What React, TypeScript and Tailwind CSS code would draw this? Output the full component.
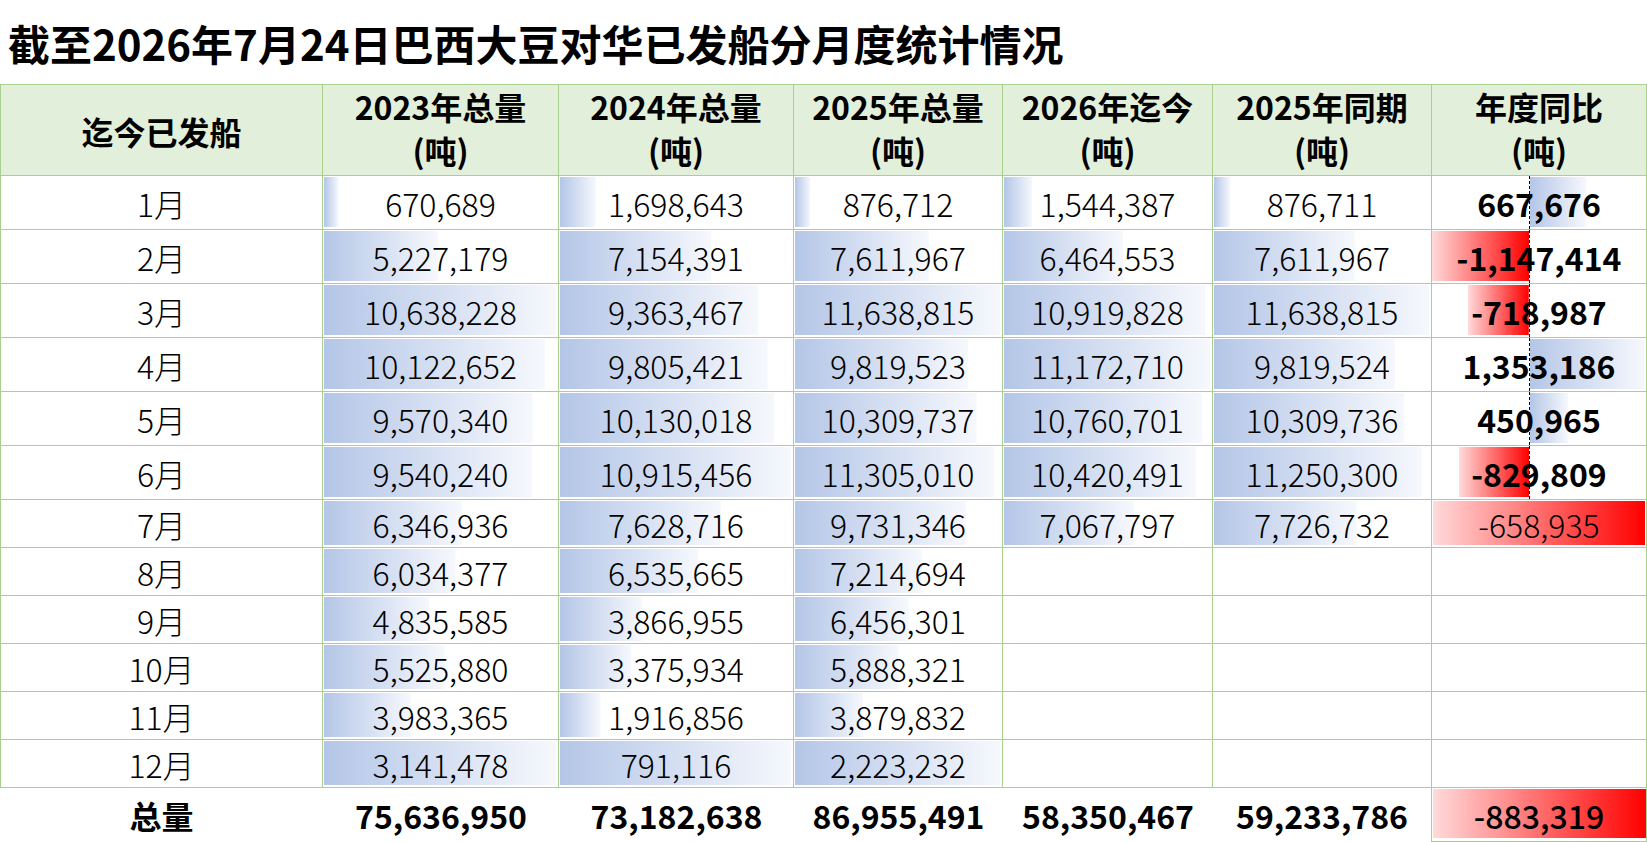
import React from "react";

type Row = { label: string; vals: (number | null)[] };

const rows: Row[] = [
  { label: "1月", vals: [670689, 1698643, 876712, 1544387, 876711, 667676] },
  { label: "2月", vals: [5227179, 7154391, 7611967, 6464553, 7611967, -1147414] },
  { label: "3月", vals: [10638228, 9363467, 11638815, 10919828, 11638815, -718987] },
  { label: "4月", vals: [10122652, 9805421, 9819523, 11172710, 9819524, 1353186] },
  { label: "5月", vals: [9570340, 10130018, 10309737, 10760701, 10309736, 450965] },
  { label: "6月", vals: [9540240, 10915456, 11305010, 10420491, 11250300, -829809] },
  { label: "7月", vals: [6346936, 7628716, 9731346, 7067797, 7726732, -658935] },
  { label: "8月", vals: [6034377, 6535665, 7214694, null, null, null] },
  { label: "9月", vals: [4835585, 3866955, 6456301, null, null, null] },
  { label: "10月", vals: [5525880, 3375934, 5888321, null, null, null] },
  { label: "11月", vals: [3983365, 1916856, 3879832, null, null, null] },
  { label: "12月", vals: [3141478, 791116, 2223232, null, null, null] },
];

const totals = [75636950, 73182638, 86955491, 58350467, 59233786];
const totalYoy = -883319;

// inner widths (content, without right border) of the six value columns
const inner = [235, 234, 208, 209, 218, 214];
// max values for the bar ranges
const maxes = [10638228, 10915456, 11638815, 11172710, 11638815];

const headers: string[][] = [
  ["2023年总量", "(吨)"],
  ["2024年总量", "(吨)"],
  ["2025年总量", "(吨)"],
  ["2026年迄今", "(吨)"],
  ["2025年同期", "(吨)"],
  ["年度同比", "(吨)"],
];

const fmt = (n: number) => n.toLocaleString("en-US");

const BLUE = "linear-gradient(to right, #b4c6e7, #f6f8fd)";
const RED = "linear-gradient(to right, #ffdada, #ff0000)";

const AXIS = 97;
const K = 97 / 1147414;

function barStyle(w: number, left: number, grad: string): React.CSSProperties {
  return {
    backgroundImage: grad,
    backgroundSize: `${w}px calc(100% - 3px)`,
    backgroundPosition: `${left}px 1px`,
    backgroundRepeat: "no-repeat",
  };
}

export default function App() {
  const cellBase =
    "relative flex items-center justify-center border-r border-b border-[#a9d08e] text-[32px] leading-none text-black";

  return (
    <div className="w-[1647px] h-[842px] bg-white overflow-hidden font-['Noto_Sans_CJK_SC',sans-serif] text-black">
      <div className="h-[84px] flex items-center pl-[8px] text-[42px] font-bold">
        截至2026年7月24日巴西大豆对华已发船分月度统计情况
      </div>
      <div className="grid grid-cols-[323px_236px_235px_209px_210px_219px_215px]">
        {/* header */}
        <div className="h-[92px] flex items-center justify-center border-l border-t border-r border-b border-[#a9d08e] bg-[#e2efda] text-[32px] font-bold pt-[2px]">
          迄今已发船
        </div>
        {headers.map((h, i) => (
          <div
            key={i}
            className="h-[92px] flex flex-col items-center justify-center border-t border-r border-b border-[#a9d08e] bg-[#e2efda] text-[32px] font-bold leading-[44px] pb-[4px]"
          >
            <span>{h[0]}</span>
            <span>{h[1]}</span>
          </div>
        ))}

        {/* body */}
        {rows.map((r, ri) => {
          const h = ri < 6 ? "h-[54px]" : "h-[48px]";
          return (
            <React.Fragment key={r.label}>
              <div className={`${cellBase} ${h} border-l font-light`}>{r.label}</div>
              {r.vals.map((v, ci) => {
                if (v === null) {
                  return <div key={ci} className={`${cellBase} ${h}`} />;
                }
                if (ci < 5) {
                  const W = inner[ci] - 3;
                  const w = ri === 11 ? W : (v / maxes[ci]) * W;
                  return (
                    <div key={ci} className={`${cellBase} ${h} font-light`} style={barStyle(w, 1, BLUE)}>
                      <span className="relative">{fmt(v)}</span>
                    </div>
                  );
                }
                // YoY column
                if (ri === 6) {
                  return (
                    <div key={ci} className={`${cellBase} ${h} font-light`} style={barStyle(212, 1, RED)}>
                      <span className="relative">{fmt(v)}</span>
                    </div>
                  );
                }
                const w = Math.abs(v) * K;
                const style =
                  v < 0 ? barStyle(w, AXIS - w, RED) : barStyle(w, AXIS + 1, BLUE);
                return (
                  <div key={ci} className={`${cellBase} ${h} font-bold`} style={style}>
                    <div className="absolute top-0 bottom-[-1px] left-[97px] w-px bg-[repeating-linear-gradient(to_bottom,#000_0px,#000_3px,transparent_3px,transparent_5px)]" />
                    <span className="relative">{fmt(v)}</span>
                  </div>
                );
              })}
            </React.Fragment>
          );
        })}

        {/* totals */}
        <div className="h-[54px] flex items-center justify-center text-[32px] font-bold leading-none">总量</div>
        {totals.map((t, i) => (
          <div
            key={i}
            className={`h-[54px] flex items-center justify-center text-[32px] font-bold leading-none ${
              i === 4 ? "border-r border-[#a9d08e]" : ""
            }`}
          >
            {fmt(t)}
          </div>
        ))}
        <div
          className="h-[54px] flex items-center justify-center border-r border-b border-[#a9d08e] text-[32px] font-medium leading-none"
          style={{
            backgroundImage: RED,
            backgroundSize: "213px calc(100% - 4px)",
            backgroundPosition: "1px 1px",
            backgroundRepeat: "no-repeat",
          }}
        >
          {fmt(totalYoy)}
        </div>
      </div>
    </div>
  );
}
